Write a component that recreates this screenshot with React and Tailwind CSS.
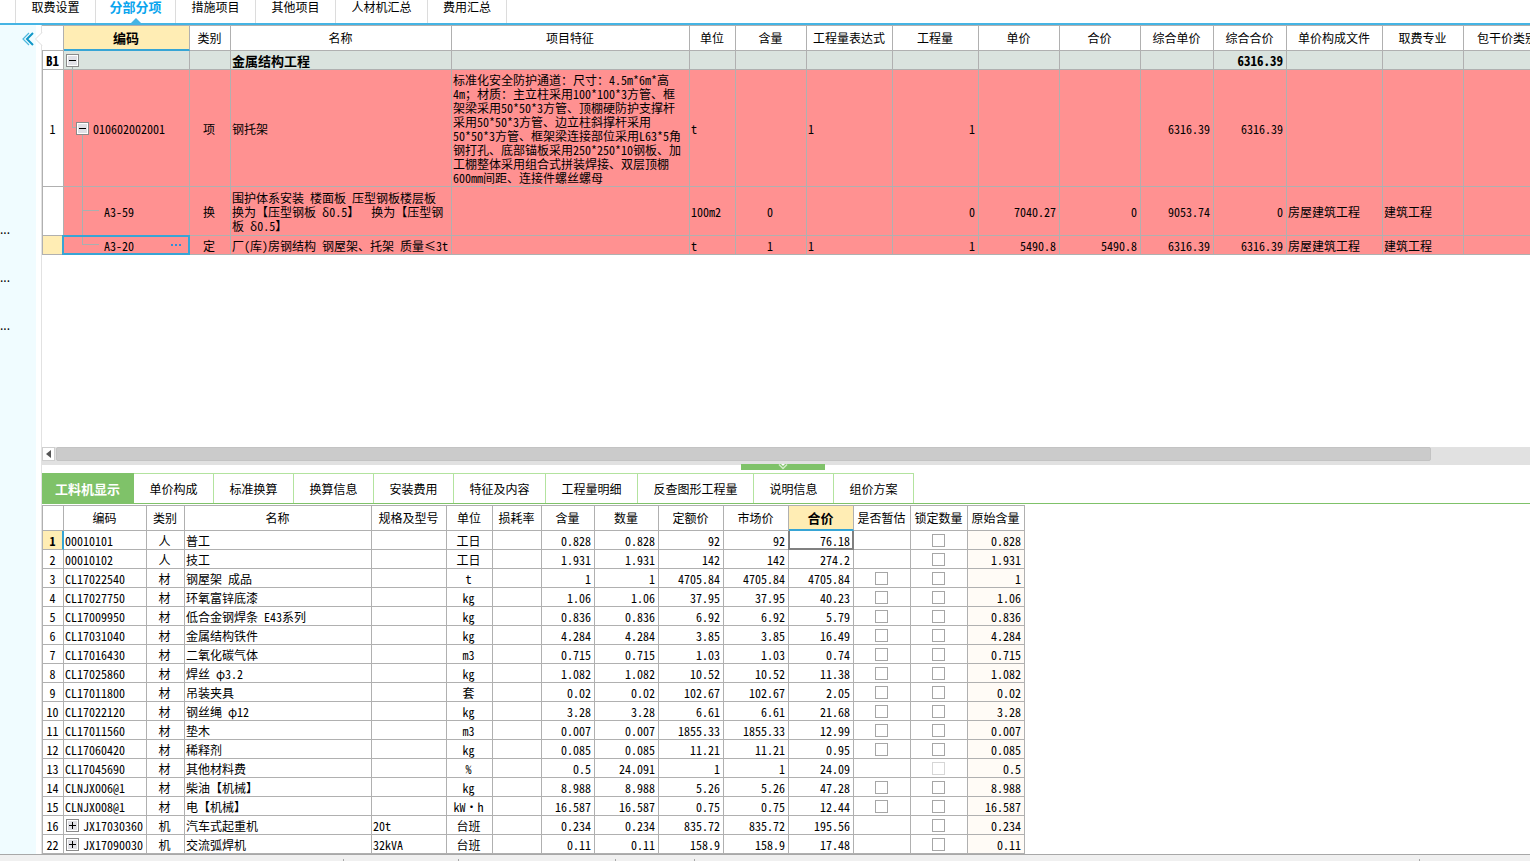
import clsx from "clsx";

const topTabs = [
  { label: "取费设置", width: "w-20" },
  { label: "分部分项", width: "w-20", active: true },
  { label: "措施项目", width: "w-20" },
  { label: "其他项目", width: "w-20" },
  { label: "人材机汇总", width: "w-[92px]" },
  { label: "费用汇总", width: "w-20" },
];

const detailTabs = [
  { label: "工料机显示", width: "w-[92px]", active: true },
  { label: "单价构成", width: "w-20" },
  { label: "标准换算", width: "w-20" },
  { label: "换算信息", width: "w-20" },
  { label: "安装费用", width: "w-20" },
  { label: "特征及内容", width: "w-[92px]" },
  { label: "工程量明细", width: "w-[92px]" },
  { label: "反查图形工程量", width: "w-[116px]" },
  { label: "说明信息", width: "w-20" },
  { label: "组价方案", width: "w-20" },
];

const billColumns = [
  { label: "", width: "w-[22px]", align: "text-center" },
  { label: "编码", width: "w-[126px]", align: "text-left", active: true },
  { label: "类别", width: "w-[41px]", align: "text-center" },
  { label: "名称", width: "w-[221px]", align: "text-left" },
  { label: "项目特征", width: "w-[238px]", align: "text-left" },
  { label: "单位", width: "w-[46px]", align: "text-left" },
  { label: "含量", width: "w-[71px]", align: "text-center" },
  { label: "工程量表达式", width: "w-[86px]", align: "text-left" },
  { label: "工程量", width: "w-[86px]", align: "text-right" },
  { label: "单价", width: "w-[81px]", align: "text-right" },
  { label: "合价", width: "w-[81px]", align: "text-right" },
  { label: "综合单价", width: "w-[73px]", align: "text-right" },
  { label: "综合合价", width: "w-[73px]", align: "text-right" },
  { label: "单价构成文件", width: "w-[96px]", align: "text-left" },
  { label: "取费专业", width: "w-[81px]", align: "text-left" },
  { label: "包干价类别", width: "w-[88px]", align: "text-left" },
];

const feature = [
  "标准化安全防护通道：尺寸：4.5m*6m*高",
  "4m；材质：主立柱采用100*100*3方管、框",
  "架梁采用50*50*3方管、顶棚硬防护支撑杆",
  "采用50*50*3方管、边立柱斜撑杆采用",
  "50*50*3方管、框架梁连接部位采用L63*5角",
  "钢打孔、底部锚板采用250*250*10钢板、加",
  "工棚整体采用组合式拼装焊接、双层顶棚",
  "600mm间距、连接件螺丝螺母",
].join("\n");

const subName = [
  "围护体系安装 楼面板 压型钢板楼层板",
  "换为【压型钢板 δ0.5】  换为【压型钢",
  "板 δ0.5】",
].join("\n");

const billRows = [
  {
    height: "h-[117px]",
    no: "1",
    code: <ItemCode />,
    cells: ["项", "钢托架", feature, "t", "", "1", "1", "", "", "6316.39", "6316.39", "", "", ""],
  },
  {
    height: "h-[49px]",
    no: "",
    code: <ChildCode code="A3-59" />,
    cells: ["换", subName, "", "100m2", "0", "", "0", "7040.27", "0", "9053.74", "0", "房屋建筑工程", "建筑工程", ""],
  },
  {
    height: "h-[19px]",
    no: "",
    current: true,
    code: <ChildCode code="A3-20" last />,
    cells: [
      "定", "厂(库)房钢结构 钢屋架、托架 质量≤3t", "", "t", "1", "1", "1", "5490.8", "5490.8",
      "6316.39", "6316.39", "房屋建筑工程", "建筑工程", "",
    ],
  },
];

const resourceColumns = [
  { label: "", width: "w-[22px]", align: "text-center" },
  { label: "编码", width: "w-[83px]", align: "text-left" },
  { label: "类别", width: "w-[38px]", align: "text-center" },
  { label: "名称", width: "w-[187px]", align: "text-left" },
  { label: "规格及型号", width: "w-[75px]", align: "text-left" },
  { label: "单位", width: "w-[46px]", align: "text-center" },
  { label: "损耗率", width: "w-[49px]", align: "text-right" },
  { label: "含量", width: "w-[53px]", align: "text-right" },
  { label: "数量", width: "w-[64px]", align: "text-right" },
  { label: "定额价", width: "w-[65px]", align: "text-right" },
  { label: "市场价", width: "w-[65px]", align: "text-right" },
  { label: "合价", width: "w-[65px]", align: "text-right", active: true },
  { label: "是否暂估", width: "w-[57px]", align: "text-center" },
  { label: "锁定数量", width: "w-[57px]", align: "text-center" },
  { label: "原始含量", width: "w-[57px]", align: "text-right" },
];

// no, code, type, name, spec, unit, content, amount, quota price, market price, total, estimate box, original
const resources = [
  ["1", "00010101", "人", "普工", "", "工日", "0.828", "0.828", "92", "92", "76.18", false, "0.828"],
  ["2", "00010102", "人", "技工", "", "工日", "1.931", "1.931", "142", "142", "274.2", false, "1.931"],
  ["3", "CL17022540", "材", "钢屋架 成品", "", "t", "1", "1", "4705.84", "4705.84", "4705.84", true, "1"],
  ["4", "CL17027750", "材", "环氧富锌底漆", "", "kg", "1.06", "1.06", "37.95", "37.95", "40.23", true, "1.06"],
  ["5", "CL17009950", "材", "低合金钢焊条 E43系列", "", "kg", "0.836", "0.836", "6.92", "6.92", "5.79", true, "0.836"],
  ["6", "CL17031040", "材", "金属结构铁件", "", "kg", "4.284", "4.284", "3.85", "3.85", "16.49", true, "4.284"],
  ["7", "CL17016430", "材", "二氧化碳气体", "", "m3", "0.715", "0.715", "1.03", "1.03", "0.74", true, "0.715"],
  ["8", "CL17025860", "材", "焊丝 φ3.2", "", "kg", "1.082", "1.082", "10.52", "10.52", "11.38", true, "1.082"],
  ["9", "CL17011800", "材", "吊装夹具", "", "套", "0.02", "0.02", "102.67", "102.67", "2.05", true, "0.02"],
  ["10", "CL17022120", "材", "钢丝绳 φ12", "", "kg", "3.28", "3.28", "6.61", "6.61", "21.68", true, "3.28"],
  ["11", "CL17011560", "材", "垫木", "", "m3", "0.007", "0.007", "1855.33", "1855.33", "12.99", true, "0.007"],
  ["12", "CL17060420", "材", "稀释剂", "", "kg", "0.085", "0.085", "11.21", "11.21", "0.95", true, "0.085"],
  ["13", "CL17045690", "材", "其他材料费", "", "%", "0.5", "24.091", "1", "1", "24.09", false, "0.5"],
  ["14", "CLNJX006@1", "材", "柴油【机械】", "", "kg", "8.988", "8.988", "5.26", "5.26", "47.28", true, "8.988"],
  ["15", "CLNJX008@1", "材", "电【机械】", "", "kW·h", "16.587", "16.587", "0.75", "0.75", "12.44", true, "16.587"],
  ["16", "JX17030360", "机", "汽车式起重机", "20t", "台班", "0.234", "0.234", "835.72", "835.72", "195.56", false, "0.234"],
  ["22", "JX17090030", "机", "交流弧焊机", "32kVA", "台班", "0.11", "0.11", "158.9", "158.9", "17.48", false, "0.11"],
];

const textCell = "border-r border-b border-[#b0b0b0] pt-0.5 pr-[3px] pl-px";
const toolCell = "border-r border-b border-[#b0b0b0] pr-[3px] pl-px";

function TreeButton({ open, label }) {
  return (
    <button
      type="button"
      aria-label={label}
      aria-expanded={open}
      className="relative z-10 size-[13px] shrink-0 border border-[#8a8a8a] bg-[#e0e0e6]"
    >
      <svg viewBox="0 0 11 11" className="block size-[11px]" shapeRendering="crispEdges">
        <rect x="0.5" y="0.5" width="10" height="10" fill="none" stroke="#fff" />
        <path d={open ? "M2 5.5h7" : "M2 5.5h7M5.5 2v7"} stroke="#000" />
      </svg>
    </button>
  );
}

function ItemCode() {
  return (
    <div className="flex items-center gap-1 pl-[11px]">
      <span className="absolute top-0 left-2 h-1/2 w-1 border-b border-l border-[#a8b0b0]" />
      <span className="absolute bottom-0 left-[18px] h-1/2 border-l border-[#a8b0b0]" />
      <TreeButton open label="收起 010602002001" />
      <span className="pt-0.5">010602002001</span>
    </div>
  );
}

function ChildCode({ code, last }) {
  return (
    <div className="flex items-center justify-between pr-[5px] pl-[39px]">
      <span className="absolute top-0 left-[18px] h-1/2 w-[17px] border-b border-l border-[#a8b0b0]" />
      {!last && <span className="absolute bottom-0 left-[18px] h-1/2 border-l border-[#a8b0b0]" />}
      <span className="pt-0.5">{code}</span>
      {last && (
        <button type="button" aria-label="选择定额" className="z-10 flex gap-0.5">
          <i className="size-0.5 bg-[#2f8fd8]" />
          <i className="size-0.5 bg-[#2f8fd8]" />
          <i className="size-0.5 bg-[#2f8fd8]" />
        </button>
      )}
      {last && (
        <span className="pointer-events-none absolute -top-px -right-px -bottom-px -left-0.5 border-2 border-[#37a5d5]" />
      )}
    </div>
  );
}

function GridHead({ columns, leftEdge }) {
  return (
    <>
      <colgroup>
        {columns.map((col, i) => (
          <col key={i} className={col.width} />
        ))}
      </colgroup>
      <thead>
        <tr className="h-[26px]">
          {columns.map((col, i) => (
            <th
              key={i}
              scope="col"
              className={clsx(
                "overflow-hidden border-t border-r border-[#b0b0b0] pr-px text-center",
                i === 0 && leftEdge && "border-l",
                col.active
                  ? "border-b-2 border-b-[#37a5d5] bg-[#ffedb4] text-[13px] font-bold"
                  : "border-b font-normal"
              )}
            >
              {col.label}
            </th>
          ))}
        </tr>
      </thead>
    </>
  );
}

function BillGrid() {
  return (
    <table className="w-[1510px] table-fixed border-separate border-spacing-0 whitespace-pre">
      <GridHead columns={billColumns} />
      <tbody>
        <tr className="h-[19px] bg-[#dae3de] text-[13px] font-bold">
          <td className="border-x border-b border-[#b0b0b0] bg-white pt-0.5 pr-px text-center">B1</td>
          <td className={clsx(toolCell, "relative")}>
            <span className="absolute bottom-0 left-2 h-1/2 border-l border-[#a8b0b0]" />
            <div className="flex pl-px">
              <TreeButton open label="收起 金属结构工程" />
            </div>
          </td>
          {billColumns.slice(2).map((col) => (
            <td key={col.label} className={clsx(textCell, col.align)}>
              {col.label === "名称" && "金属结构工程"}
              {col.label === "综合合价" && "6316.39"}
            </td>
          ))}
        </tr>
        {billRows.map((row, i) => (
          <tr key={i} className={clsx("bg-[#ff9191]", row.height)}>
            <td
              className={clsx(
                "border-x border-b border-[#b0b0b0] pt-0.5 pr-px text-center",
                row.current ? "bg-[#ffedb4]" : "bg-white"
              )}
            >
              {row.no}
            </td>
            <td className={clsx(toolCell, "relative")}>{row.code}</td>
            {row.cells.map((text, c) => (
              <td key={c} className={clsx(textCell, billColumns[c + 2].align)}>
                {text}
              </td>
            ))}
          </tr>
        ))}
      </tbody>
    </table>
  );
}

function Check({ label, disabled }) {
  return (
    <input
      type="checkbox"
      aria-label={label}
      disabled={disabled}
      className="mx-auto block size-[13px] appearance-none border border-[#a6a6a6] bg-white disabled:border-[#d6d6d6]"
    />
  );
}

function ResourceRow({ row, current }) {
  const [no, code, type, name, spec, unit, content, amount, quota, market, total, estimate, original] = row;

  return (
    <tr className="h-[19px]">
      <td
        className={clsx(
          "border-b border-l border-[#b0b0b0] pt-0.5 text-center",
          current ? "border-r-2 border-r-[#37a5d5] bg-[#ffedb4] font-bold" : "border-r pr-px"
        )}
      >
        {no}
      </td>
      {type === "机" ? (
        <td className={toolCell}>
          <div className="flex items-center gap-1 pl-px">
            <TreeButton open={false} label={`展开 ${code}`} />
            <span className="pt-0.5">{code}</span>
          </div>
        </td>
      ) : (
        <td className={textCell}>{code}</td>
      )}
      <td className={clsx(textCell, "text-center")}>{type}</td>
      <td className={textCell}>{name}</td>
      <td className={textCell}>{spec}</td>
      <td className={clsx(textCell, "text-center")}>{unit}</td>
      <td className={textCell} />
      <td className={clsx(textCell, "text-right")}>{content}</td>
      <td className={clsx(textCell, "text-right")}>{amount}</td>
      <td className={clsx(textCell, "text-right")}>{quota}</td>
      <td className={clsx(textCell, "text-right")}>{market}</td>
      <td className={clsx(textCell, "relative text-right")}>
        {total}
        {current && (
          <span className="pointer-events-none absolute top-0 -right-px -bottom-px -left-px border-2 border-t-0 border-[#808080]" />
        )}
      </td>
      <td className={toolCell}>{estimate && <Check label={`${name} 是否暂估`} />}</td>
      <td className={toolCell}>
        <Check label={`${name} 锁定数量`} disabled={unit === "%"} />
      </td>
      <td className={clsx(textCell, "bg-[#fffbf6] text-right")}>{original}</td>
    </tr>
  );
}

function TopTabs() {
  return (
    <nav className="flex h-[25px] shrink-0 border-b-2 border-[#45b4e4] pl-[15px]">
      {topTabs.map((tab) => (
        <button
          key={tab.label}
          type="button"
          className={clsx(
            "relative border-l border-[#dcdcdc] pb-2.5 last:border-r",
            tab.width,
            tab.active && "text-[13px] font-bold text-[#0aa5ee]"
          )}
        >
          {tab.label}
          {tab.active && (
            <svg viewBox="0 0 10 5" className="absolute bottom-0 left-[35px] h-[5px] w-2.5">
              <path d="M5 0 10 5H0z" fill="#45b4e4" />
            </svg>
          )}
        </button>
      ))}
    </nav>
  );
}

function Sidebar() {
  return (
    <aside className="relative flex w-[42px] shrink-0 border-r border-[#e2e2e2]">
      <div className="w-9 bg-[#f0fcff] pt-[7px]">
        <button type="button" aria-label="收起侧栏" className="ml-[22px] block">
          <svg viewBox="0 0 12 14" className="block h-3.5 w-3" fill="none">
            <path d="M7 1 1 7l6 6" stroke="#4db8de" strokeWidth="1.2" />
            <path d="M11 1 5 7l6 6" stroke="#0f97c8" strokeWidth="2" />
          </svg>
        </button>
        <div className="flex flex-col gap-[34px] pt-[176px] leading-[14px] [font-feature-settings:normal]">
          <span>...</span>
          <span>...</span>
          <span>...</span>
        </div>
      </div>
      <svg viewBox="0 0 8 14" className="absolute top-[7px] -right-[2px] z-10 h-3.5 w-2">
        <path d="M7 .5.5 7 7 13.5" fill="#fff" stroke="#dcdcdc" />
      </svg>
    </aside>
  );
}

function ScrollBar() {
  return (
    <div className="h-[18px] shrink-0 bg-[#e1e1e1]">
      <div className="flex h-3.5">
        <button
          type="button"
          aria-label="向左滚动"
          className="flex w-[13px] items-center justify-center border border-[#cfcfcf] bg-white"
        >
          <svg viewBox="0 0 5 8" className="h-2 w-[5px]">
            <path d="M5 0v8L0 4z" fill="#555" />
          </svg>
        </button>
        <div className="ml-px w-[1375px] rounded-xs border border-[#c3c3c3] bg-[#cbcbcb]" />
      </div>
    </div>
  );
}

function DetailPanel() {
  return (
    <section className="relative shrink-0 pt-2">
      <button
        type="button"
        aria-label="收起明细"
        className="absolute -top-px left-[699px] flex h-1.5 w-[84px] items-center justify-center bg-[#7fc269]"
      >
        <svg viewBox="0 0 10 6" className="h-1.5 w-2.5" fill="none">
          <path d="M3 0h4L5 2z" fill="#fff" />
          <path d="M1 .5 5 4.500l4-4" stroke="#d3ecc9" strokeWidth="1.500" />
        </svg>
      </button>
      <div className="flex h-[31px] border-b border-[#7fc269]">
        {detailTabs.map((tab) => (
          <button
            key={tab.label}
            type="button"
            className={clsx(
              "border-t border-r",
              tab.width,
              tab.active
                ? "border-[#7fc269] bg-[#7fc269] text-[13px] font-bold text-white"
                : "border-[#b3e39f]"
            )}
          >
            {tab.label}
          </button>
        ))}
      </div>
      <div className="overflow-hidden pt-px">
        <table className="w-[983px] table-fixed border-separate border-spacing-0 whitespace-pre">
          <GridHead columns={resourceColumns} leftEdge />
          <tbody>
            {resources.map((row, i) => (
              <ResourceRow key={row[0]} row={row} current={i === 0} />
            ))}
          </tbody>
        </table>
      </div>
    </section>
  );
}

export default function App() {
  return (
    <div className="flex h-screen flex-col overflow-hidden bg-white font-['Noto_Sans_CJK_SC',sans-serif] text-[12px] leading-[14px] text-black [font-feature-settings:'hwid']">
      <TopTabs />
      <div className="flex min-h-0 flex-1">
        <Sidebar />
        <main className="flex min-w-0 flex-1 flex-col">
          <div className="min-h-0 flex-1 overflow-hidden">
            <BillGrid />
          </div>
          <ScrollBar />
          <DetailPanel />
        </main>
      </div>
      <footer className="flex h-[7px] shrink-0 items-end border-t border-[#a8a8a8] bg-[#f0f0f0]">
        <span className="h-0.5 w-[344px] border-r border-[#a8a8a8]" />
        <span className="h-0.5 w-[115px] border-r border-[#a8a8a8]" />
        <span className="h-0.5 w-[157px] border-r border-[#a8a8a8]" />
        <span className="h-0.5 w-[79px] border-r border-[#a8a8a8]" />
        <span className="h-0.5 w-[725px] border-r border-[#a8a8a8]" />
      </footer>
    </div>
  );
}
